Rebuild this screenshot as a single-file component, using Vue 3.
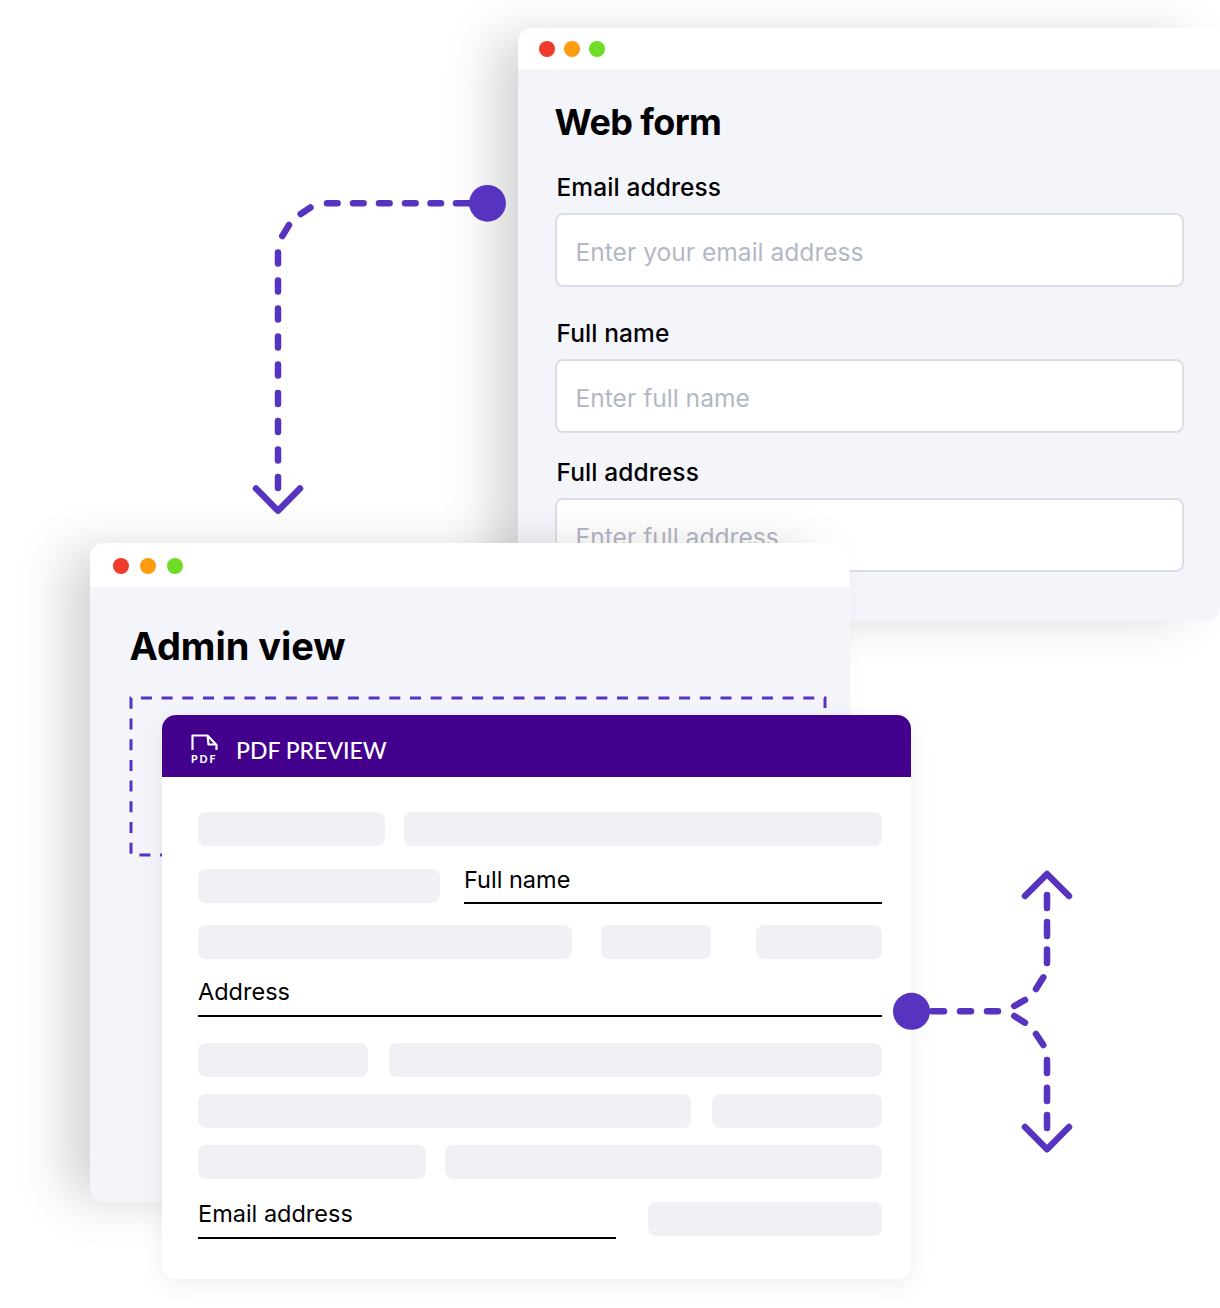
<script setup>
const fields = [
  { label: 'Email address', placeholder: 'Enter your email address' },
  { label: 'Full name', placeholder: 'Enter full name' },
  { label: 'Full address', placeholder: 'Enter full address' },
]
const dots = ['red', 'orange', 'green']
const linesA = [
  [327,203.3,337.6,203.3],[353,203.3,363.6,203.3],[379,203.3,389.6,203.3],[405,203.3,415.6,203.3],[430.5,203.3,441,203.3],[456,203.3,470,203.3],
  [310.5,207.5,300.7,214],[289,225,282.3,236],
  [278,252.5,278,263.5],[278,280.5,278,291.5],[278,308.5,278,319.5],[278,336.5,278,347.5],[278,364.5,278,375.5],[278,393,278,404],[278,421,278,432],[278,449.5,278,460.5],[278,477,278,488],
]
const linesB = [
  [932,1011.3,944,1011.3],[960,1011.3,971,1011.3],[987,1011.3,998,1011.3],
  [1014.3,1006,1025,1000],[1036,989,1043.3,977.3],[1047,949.5,1047,963],[1047,922,1047,936],[1047,895,1047,908],
  [1014.3,1016,1025,1022.7],[1036,1034,1043.3,1045],[1047,1060,1047,1073],[1047,1087.7,1047,1101],[1047,1115,1047,1128],
]
</script>

<template>
  <div class="canvas">
    <section class="win web">
      <header class="bar web-bar">
        <i v-for="d in dots" :key="d" class="dot" :class="d"></i>
      </header>
      <div class="web-body">
        <h2 class="web-title">Web form</h2>
        <div v-for="f in fields" :key="f.label" class="field">
          <label>{{ f.label }}</label>
          <div class="input">{{ f.placeholder }}</div>
        </div>
      </div>
    </section>

    <section class="win admin">
      <header class="bar admin-bar">
        <i v-for="d in dots" :key="d" class="dot" :class="d"></i>
      </header>
      <h2 class="admin-title">Admin view</h2>
    </section>

    <svg class="overlay" width="1220" height="1308" viewBox="0 0 1220 1308" fill="none">
      <path d="M825 708V698H131V855H165" stroke="#5634BF" stroke-width="3" stroke-dasharray="11 9.7"/>
    </svg>

    <section class="pdf">
      <header class="pdf-head">
        <svg class="pdf-icon" width="30" height="32" viewBox="0 0 30 32" fill="none">
          <path d="M2.5 17V2.5H17.5L26.5 12V17M17.5 2.5L18.5 11.5H26.5" stroke="#fff" stroke-width="2.2" stroke-linejoin="round"/>
          <text x="1" y="30" fill="#fff" font-family="Lato, sans-serif" font-weight="900" font-size="10.5" letter-spacing="2">PDF</text>
        </svg>
        <span>PDF PREVIEW</span>
      </header>
      <div class="pdf-body">
        <div class="row gap19 h34"><b class="w187"></b><b class="grow"></b></div>
        <div class="row gap24 h34 mt23"><b class="w242"></b><div class="line grow short">Full name</div></div>
        <div class="row h34 mt22"><b class="w374"></b><b class="w110 ml"></b><b class="w126 ml2"></b></div>
        <div class="line mt21">Address</div>
        <div class="row gap21 h34 mt26"><b class="w170"></b><b class="grow"></b></div>
        <div class="row gap21 h34 mt17"><b class="w493"></b><b class="grow"></b></div>
        <div class="row gap19 h34 mt17"><b class="w228"></b><b class="grow"></b></div>
        <div class="row h34 mt23"><div class="line w418 tall">Email address</div><b class="w234 push"></b></div>
      </div>
    </section>

    <svg class="overlay" width="1220" height="1308" viewBox="0 0 1220 1308" fill="none" stroke="#5634BF" stroke-width="6.5" stroke-linecap="round" stroke-linejoin="round">
      <line v-for="(l, i) in linesA" :key="'a' + i" :x1="l[0]" :y1="l[1]" :x2="l[2]" :y2="l[3]"/>
      <path d="M256 488.5L278 510.7L300 488.5"/>
      <circle cx="487.5" cy="203.3" r="18.4" fill="#5634BF" stroke="none"/>
      <line v-for="(l, i) in linesB" :key="'b' + i" :x1="l[0]" :y1="l[1]" :x2="l[2]" :y2="l[3]"/>
      <path d="M1025 896L1047 874L1069 896"/>
      <path d="M1025 1127L1047 1149.3L1069 1127"/>
      <circle cx="911.5" cy="1011.3" r="18.5" fill="#5634BF" stroke="none"/>
    </svg>
  </div>
</template>

<style scoped>
.canvas {
  position: relative;
  width: 1220px;
  height: 1308px;
  overflow: hidden;
  background: #fff;
  font-family: Inter, "Liberation Sans", sans-serif;
  color: #000;
}
.win {
  position: absolute;
  background: #f4f5fb;
  box-shadow: -30px 2px 50px -6px rgba(0, 0, 0, 0.17);
}
.web {
  left: 518px;
  top: 28px;
  width: 702px;
  height: 593px;
  border-radius: 14px 0 14px 14px;
}
.admin {
  left: 90px;
  top: 543px;
  width: 760px;
  height: 659px;
  border-radius: 14px;
}
.bar {
  display: flex;
  align-items: center;
  background: #fff;
  border-radius: 14px 0 0 0;
}
.web-bar { height: 41px; padding-left: 21px; gap: 9px; }
.admin-bar { box-sizing: border-box; height: 44px; padding: 2px 0 0 23px; gap: 11px; border-radius: 14px 14px 0 0; }
.dot { width: 16px; height: 16px; border-radius: 50%; display: block; }
.red { background: #ee3b2b; }
.orange { background: #ff9b0f; }
.green { background: #6fdd26; }
.web-body { padding: 32px 36px 0 36.5px; }
.web-title { margin: 0 0 30px; font-size: 36px; line-height: 42px; font-weight: 700; letter-spacing: -0.6px; }
.field { margin-bottom: 32px; }
.field:nth-of-type(2) { margin-bottom: 25px; }
.field label { display: block; margin: 0 0 11px 2px; font-size: 24.5px; line-height: 29px; font-weight: 500; letter-spacing: 0.1px; }
.input {
  box-sizing: border-box;
  height: 74px;
  padding: 3px 20px 0 19px;
  display: flex;
  align-items: center;
  background: #fff;
  border: 2px solid #dcdee6;
  border-radius: 8px;
  font-size: 24.6px;
  color: #b3b7c6;
}
.admin-title { margin: 35px 0 0 39.5px; font-size: 38px; line-height: 48px; font-weight: 700; letter-spacing: -0.05px; }
.overlay { position: absolute; left: 0; top: 0; pointer-events: none; }
.pdf {
  position: absolute;
  left: 162px;
  top: 715px;
  width: 749px;
  height: 564px;
  background: #fff;
  border-radius: 14px;
  box-shadow: 0 6px 24px rgba(0, 0, 0, 0.07);
  overflow: hidden;
}
.pdf-head {
  box-sizing: border-box;
  height: 62px;
  display: flex;
  align-items: center;
  gap: 16px;
  padding: 7px 0 0 28px;
  background: #42008c;
  color: #fff;
  font-family: Lato, sans-serif;
  font-size: 23px;
  font-weight: 500;
}
.pdf-icon { margin-top: -1px; }
.pdf-body { padding: 35px 29px 0 36px; }
.row { display: flex; }
.row b { display: block; height: 34px; background: #f0f1f5; border-radius: 8px; }
.h34 { height: 34px; }
.gap19 { gap: 19px; }
.gap21 { gap: 21px; }
.gap24 { gap: 24px; }
.grow { flex: 1; }
.w187 { width: 187px; }
.w242 { width: 242px; }
.w374 { width: 374px; }
.w110 { width: 110px; }
.w126 { width: 126px; }
.ml { margin-left: 29px; }
.ml2 { margin-left: 45px; }
.w170 { width: 170px; }
.w493 { width: 493px; }
.w228 { width: 228px; }
.w418 { width: 418px; }
.w234 { width: 234px; }
.push { margin-left: auto; }
.mt17 { margin-top: 17px; }
.mt21 { margin-top: 21px; }
.mt22 { margin-top: 22px; }
.mt23 { margin-top: 23px; }
.mt26 { margin-top: 26px; }
.line {
  box-sizing: border-box;
  height: 37px;
  border-bottom: 2px solid #000;
  font-size: 23.5px;
  line-height: 24px;
}
.line.short { line-height: 22px; }
.row .line { height: 35px; }
.row .line.tall { height: 37px; }
</style>
